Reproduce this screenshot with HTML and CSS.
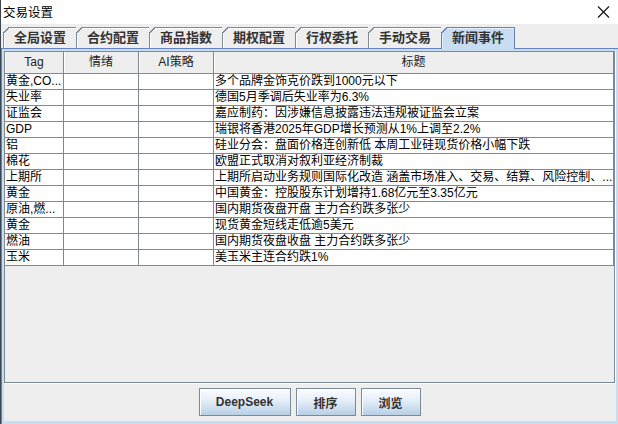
FILE: index.html
```html
<!DOCTYPE html>
<html lang="zh-CN">
<head>
  <meta charset="UTF-8">
  <title>交易设置</title>
  <link rel="stylesheet" href="styles.css">
</head>
<body>
  <div class="titlebar">
    <span class="title">交易设置</span>
    <svg class="close" width="13" height="12" viewBox="0 0 13 12">
      <path d="M1 0.5 L12 11.5 M12 0.5 L1 11.5" stroke="#111" stroke-width="1.1" fill="none"/>
    </svg>
  </div>
  <div class="tabs">
    <div class="tab">全局设置</div>
    <div class="tab">合约配置</div>
    <div class="tab">商品指数</div>
    <div class="tab">期权配置</div>
    <div class="tab">行权委托</div>
    <div class="tab">手动交易</div>
    <div class="tab active">新闻事件</div>
  </div>
  <div class="tab-body">
    <div class="panel">
      <div class="pane">
        <div class="row head">
          <div class="cell">Tag</div>
          <div class="cell">情绪</div>
          <div class="cell">AI策略</div>
          <div class="cell">标题</div>
        </div>
        <div class="row"><div class="cell">黄金,CO...</div><div class="cell"></div><div class="cell"></div><div class="cell">多个品牌金饰克价跌到1000元以下</div></div>
        <div class="row"><div class="cell">失业率</div><div class="cell"></div><div class="cell"></div><div class="cell">德国5月季调后失业率为6.3%</div></div>
        <div class="row"><div class="cell">证监会</div><div class="cell"></div><div class="cell"></div><div class="cell">嘉应制药：因涉嫌信息披露违法违规被证监会立案</div></div>
        <div class="row"><div class="cell">GDP</div><div class="cell"></div><div class="cell"></div><div class="cell">瑞银将香港2025年GDP增长预测从1%上调至2.2%</div></div>
        <div class="row"><div class="cell">铝</div><div class="cell"></div><div class="cell"></div><div class="cell">硅业分会：盘面价格连创新低 本周工业硅现货价格小幅下跌</div></div>
        <div class="row"><div class="cell">棉花</div><div class="cell"></div><div class="cell"></div><div class="cell">欧盟正式取消对叙利亚经济制裁</div></div>
        <div class="row"><div class="cell">上期所</div><div class="cell"></div><div class="cell"></div><div class="cell">上期所启动业务规则国际化改造 涵盖市场准入、交易、结算、风险控制、...</div></div>
        <div class="row"><div class="cell">黄金</div><div class="cell"></div><div class="cell"></div><div class="cell">中国黄金：控股股东计划增持1.68亿元至3.35亿元</div></div>
        <div class="row"><div class="cell">原油,燃...</div><div class="cell"></div><div class="cell"></div><div class="cell">国内期货夜盘开盘 主力合约跌多张少</div></div>
        <div class="row"><div class="cell">黄金</div><div class="cell"></div><div class="cell"></div><div class="cell">现货黄金短线走低逾5美元</div></div>
        <div class="row"><div class="cell">燃油</div><div class="cell"></div><div class="cell"></div><div class="cell">国内期货夜盘收盘 主力合约跌多张少</div></div>
        <div class="row"><div class="cell">玉米</div><div class="cell"></div><div class="cell"></div><div class="cell">美玉米主连合约跌1%</div></div>
      </div>
      <div class="buttons">
        <button class="wide">DeepSeek</button>
        <button>排序</button>
        <button>浏览</button>
      </div>
    </div>
  </div>
</body>
</html>
```
FILE: styles.css
```css
body {
  margin: 0;
  width: 617px;
  height: 424px;
  overflow: hidden;
  border-left: 1px solid #3c4650;
  background-color: #eeeeee;
  font-family: "Liberation Sans", "Noto Sans CJK SC", sans-serif;
  font-size: 12px;
  color: #000;
  display: flex;
  flex-direction: column;
}
.titlebar {
  height: 24px;
  background-color: #fff;
  display: flex;
  align-items: center;
  justify-content: space-between;
  padding: 0 8px 0 2px;
}
.title {
  font-size: 12.5px;
  margin-top: -1px;
}
.tabs {
  display: flex;
  height: 21px;
  margin-top: 3px;
  padding-left: 2px;
}
.tab {
  position: relative;
  height: 21px;
  box-sizing: border-box;
  padding: 0 10px;
  margin-right: -1px;
  border: 1px solid #7a8a99;
  border-bottom: none;
  box-shadow: inset 1px 1px 0 #fff;
  font-size: 13px;
  font-weight: bold;
  color: #333;
  line-height: 19px;
}
.tab::before {
  content: "";
  position: absolute;
  left: -1px;
  top: -1px;
  width: 6px;
  height: 6px;
  background: linear-gradient(to bottom right, #eeeeee 0, #eeeeee 44%, #7a8a99 44%, #7a8a99 60%, transparent 60%);
}
.tab.active {
  background-color: #c8ddf2;
  border-color: #6382bf;
  height: 22px;
  margin-bottom: -1px;
  z-index: 1;
  box-shadow: inset 1px 1px 0 #e6f0fa;
}
.tab.active::before {
  background: linear-gradient(to bottom right, #eeeeee 0, #eeeeee 44%, #6382bf 44%, #6382bf 60%, transparent 60%);
}
.tab-body {
  flex: 1;
  display: flex;
  border-top: 1px solid #6382bf;
  border-left: 1px solid #6382bf;
  background-color: #c8ddf2;
  padding: 2px 2px 3px 2px;
}
.panel {
  flex: 1;
  background-color: #eeeeee;
  display: flex;
  flex-direction: column;
}
.pane {
  height: 332px;
  box-sizing: border-box;
  margin-right: 1px;
  border: 1px solid #7a8a99;
  box-shadow: 1px 1px 0 #fff;
  background-color: #eeeeee;
  overflow: hidden;
}
.row {
  display: grid;
  grid-template-columns: 59px 75px 75px 400px;
  height: 16px;
  background-color: #fff;
}
.cell {
  box-sizing: border-box;
  border-right: 1px solid #7a8a99;
  border-bottom: 1px solid #7a8a99;
  padding-left: 1px;
  line-height: 15px;
  white-space: nowrap;
  overflow: hidden;
}
.row.head {
  height: 22px;
  background-color: #eeeeee;
}
.head .cell {
  text-align: center;
  line-height: 21px;
  color: #222;
  box-shadow: inset 1px 0 0 #fff;
  padding-left: 0;
}
.buttons {
  flex: 1;
  display: flex;
  justify-content: center;
  align-items: center;
  gap: 5px;
  padding-right: 1px;
}
button {
  width: 60px;
  height: 28px;
  border: 1px solid #7a8a99;
  background: linear-gradient(#fbfdff, #e4eef8 45%, #b8cfe5);
  box-shadow: inset 1px 1px 0 #fff;
  font-family: "Liberation Sans", "Noto Sans CJK SC", sans-serif;
  font-size: 12px;
  font-weight: bold;
  color: #333;
  padding: 0;
}
button.wide {
  width: 92px;
}
```
